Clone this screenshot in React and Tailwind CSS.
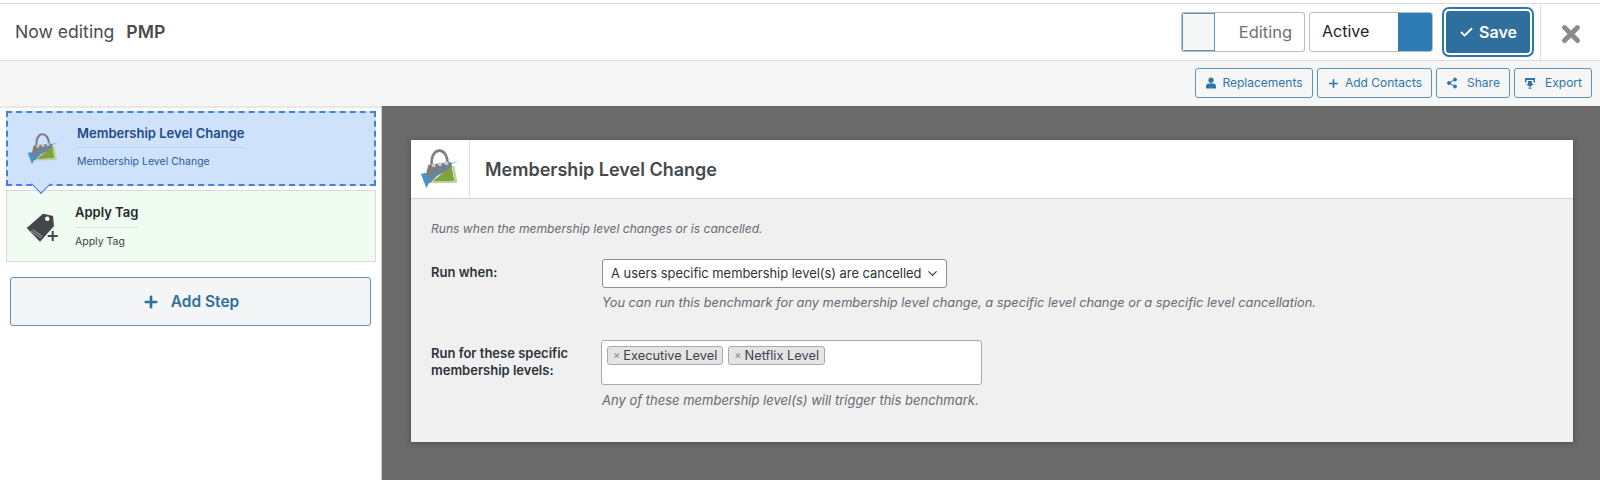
import React from "react";
import { Check, ChevronDown, Plus, Share2, X } from "lucide-react";

const font = { fontFamily: "Inter, 'Liberation Sans', sans-serif" };

const PmpLogo = ({ className }) => (
  <svg viewBox="57 55 120 120" className={className}>
    <path d="M92 102 C88 46 142 46 139 100" fill="none" stroke="#7d7d81" strokeWidth="8" />
    <path d="M82 102 L150 94 L154 112 L108 136 L88 158 L70 150 Z" fill="#7d7d81" />
    <circle cx="98" cy="104" r="6" fill="#c9cacd" />
    <circle cx="117" cy="101" r="6" fill="#c9cacd" />
    <circle cx="136" cy="98" r="6" fill="#c9cacd" />
    <path d="M102 146 L152 106 L160 150 L96 153 Z" fill="#7ea23f" />
    <path d="M94 153 L160 150 L154 106 L160 106 L169 156 L92 158 Z" fill="#bcd196" />
    <path d="M60 130 L76 172 C92 136 130 106 175 90 C136 100 102 120 84 148 L73 126 Z" fill="#3f97cc" />
  </svg>
);

const TagPlus = () => (
  <svg viewBox="0 0 36 36" className="h-[36px] w-[36px]">
    <path d="M2.7 17 L19 2.7 L29 5 L30 15 L16 30.7 Z" fill="#45464a" />
    <circle cx="23.3" cy="7.7" r="2.2" fill="#fff" />
    <path d="M7 20 L17 27 M8.5 18.5 L18.5 25.5" stroke="#c4c4c4" strokeWidth="0.8" />
    <path d="M28.7 20 V30 M23.7 25 H33.7" stroke="#f0fbf1" strokeWidth="5" />
    <path d="M28.7 20 V30 M23.7 25 H33.7" stroke="#45464a" strokeWidth="2" />
  </svg>
);

const UserIcon = () => (
  <svg viewBox="0 0 12 12" className="h-[12px] w-[12px]" fill="#2e76a8">
    <circle cx="6" cy="3.2" r="2.6" />
    <path d="M1 11.5 V9 C1 7 3 6.3 6 6.3 S11 7 11 9 V11.5 Z" />
  </svg>
);

const ExportIcon = () => (
  <svg viewBox="0 0 12 12" className="h-[12px] w-[12px]" fill="#2e76a8">
    <path d="M1 1 H11 V5.5 H9.5 V3 H2.5 V5.5 H1 Z" />
    <path d="M4 4 H8 V7 H10 L6 10 L2 7 H4 Z" />
    <rect x="4.5" y="10.5" width="3" height="1.2" />
  </svg>
);

const ToolButton = ({ w, icon, gap, children }) => (
  <button className={`flex h-[30px] items-center justify-center rounded-[3px] border border-[#5f94b8] bg-[#f6f6f7] text-[12px] text-[#2e76a8] ${w} ${gap}`}>
    {icon}
    {children}
  </button>
);

const Chip = ({ children }) => (
  <span className="flex h-[19px] items-center gap-[3px] rounded-[3px] border border-[#aaaaaa] bg-[#e4e4e4] px-[5px] text-[12.8px] text-[#3c434a]">
    <span className="text-[11px] leading-none text-[#888888]">×</span>
    {children}
  </span>
);

export default function App() {
  return (
    <div style={font} className="flex h-[480px] w-[1600px] flex-col overflow-hidden bg-white pt-[3px]">
      <header className="flex h-[58px] shrink-0 items-center border-y border-[#dcdcde] bg-white pl-[15px]">
        <div className="flex flex-1 items-center gap-3 text-[17.6px] text-[#4a4c50]">
          <span>Now editing</span>
          <strong className="font-semibold">PMP</strong>
        </div>
        <div className="flex h-[40px] w-[124px] overflow-hidden rounded-[3px] border border-[#b9bec4] text-[16.5px] text-[#6f7276]">
          <span className="w-[33px] border border-[#5f94b8] bg-[#f6f7f7]" />
          <span className="flex flex-1 items-center justify-end pr-[12px]">Editing</span>
        </div>
        <div className="ml-[4px] flex h-[40px] w-[124px] overflow-hidden rounded-[3px] border border-[#b9bec4] text-[16px] text-[#1d2327]">
          <span className="flex flex-1 items-center pb-[2px] pl-[12px]">Active</span>
          <span className="w-[34px] bg-[#2e7ab5]" />
        </div>
        <button className="ml-[11px] flex h-[46px] w-[88px] items-center justify-center gap-[5px] rounded-[5px] border-2 border-white bg-[#2e6f9e] text-[16px] font-semibold text-white outline-2 outline-[#2e76a8]">
          <Check size={15} strokeWidth={3} />
          Save
        </button>
        <div className="ml-[8px] flex h-full w-[60px] items-center justify-center border-l border-[#dcdcde] pt-[3px] text-[#8a8c8e]">
          <X size={26} strokeWidth={4.5} />
        </div>
      </header>

      <div className="flex h-[45px] shrink-0 items-start justify-end gap-[4px] bg-[#f6f6f7] pr-[8px] pt-[7px]">
        <ToolButton w="w-[118px]" gap="gap-[5px]" icon={<UserIcon />}>Replacements</ToolButton>
        <ToolButton w="w-[115px]" gap="gap-[5px]" icon={<Plus size={13} strokeWidth={3} />}>Add Contacts</ToolButton>
        <ToolButton w="w-[74px]" gap="gap-[9px]" icon={<Share2 size={12} fill="#2e76a8" strokeWidth={2} />}>Share</ToolButton>
        <ToolButton w="w-[78px]" gap="gap-[9px]" icon={<ExportIcon />}>Export</ToolButton>
      </div>

      <div className="flex min-h-0 flex-1">
        <aside className="flex w-[381px] shrink-0 flex-col border-t-2 border-[#e8e8e8] bg-white px-[6px] pt-[3px]">
          <div className="relative flex h-[75px] w-[370px] border-2 border-dashed border-[#3f83e0] bg-[#cfe2fb] pl-[19px]">
            <PmpLogo className="mt-[20px] h-[32px] w-[32px]" />
            <div className="ml-[18px] mt-[11px]">
              <div className="border-b border-[#bcd6f5] pb-[3px] text-[13px] font-semibold text-[#1e4a8c]">Membership Level Change</div>
              <div className="mt-[6px] text-[10.5px] text-[#2c5a98]">Membership Level Change</div>
            </div>
            <span className="absolute left-[26px] top-[64px] z-10 h-[14px] w-[14px] rotate-45 border-b border-r border-[#3f83e0] bg-[#cfe2fb]" />
          </div>
          <div className="mt-[4px] flex h-[72px] w-[370px] border border-[#d5dadd] bg-[#f0fbf1] pl-[17px]">
            <div className="mt-[20px]"><TagPlus /></div>
            <div className="ml-[15px] mt-[12px]">
              <div className="border-b border-[#dfe3df] pb-[4px] text-[13px] font-semibold text-[#26282b]">Apply Tag</div>
              <div className="mt-[6px] text-[10.5px] text-[#3c434a]">Apply Tag</div>
            </div>
          </div>
          <button className="ml-[4px] mt-[15px] flex h-[49px] w-[361px] items-center justify-center gap-[11px] rounded-[3px] border border-[#5f94b8] bg-[#f3f5f6] text-[15.5px] font-semibold text-[#2e6f9e]">
            <Plus size={18} strokeWidth={3.5} />
            Add Step
          </button>
        </aside>

        <main className="flex-1 border-l border-[#c9c9c9] bg-[#6b6b6b] pl-[29px] pt-[34px]">
          <section className="h-[302px] w-[1162px] bg-[#f0f0f1] shadow-[0_1px_6px_rgba(0,0,0,0.3)]">
            <div className="flex h-[59px] items-center border-b border-[#ced3da] bg-white">
              <div className="flex h-full w-[59px] items-center justify-center border-r border-[#dcdcde]">
                <PmpLogo className="h-[40px] w-[40px]" />
              </div>
              <h2 className="ml-[15px] text-[18px] font-semibold text-[#46484c]">Membership Level Change</h2>
            </div>
            <div className="pl-[20px] pt-[22px]">
              <p className="text-[12.1px] italic leading-[16px] text-[#646970]">Runs when the membership level changes or is cancelled.</p>
              <div className="mt-[22px] grid grid-cols-[171px_1fr]">
                <div className="pt-[4px] text-[13px] font-semibold text-[#2c3338]">Run when:</div>
                <div>
                  <div className="flex h-[29px] w-[345px] items-center justify-between whitespace-nowrap rounded-[3px] border border-[#8c8f94] bg-white pl-[8px] pr-[6px] text-[12.9px] text-[#2c3338]">
                    A users specific membership level(s) are cancelled
                    <ChevronDown size={15} strokeWidth={1.75} />
                  </div>
                  <p className="mt-[7px] text-[12.8px] italic leading-[16px] text-[#646970]">
                    You can run this benchmark for any membership level change, a specific level change or a specific level cancellation.
                  </p>
                </div>
                <div className="mt-[34px] text-[13px] font-semibold leading-[17px] text-[#2c3338]">
                  Run for these specific
                  <br />
                  membership levels:
                </div>
                <div className="mt-[29px]">
                  <div className="-ml-[1px] flex h-[45px] w-[381px] items-start gap-[5px] rounded-[3px] border border-[#a7aaad] bg-white pl-[5px] pt-[5px]">
                    <Chip>Executive Level</Chip>
                    <Chip>Netflix Level</Chip>
                  </div>
                  <p className="mt-[7px] text-[13px] italic leading-[16px] text-[#646970]">Any of these membership level(s) will trigger this benchmark.</p>
                </div>
              </div>
            </div>
          </section>
        </main>
      </div>
    </div>
  );
}
